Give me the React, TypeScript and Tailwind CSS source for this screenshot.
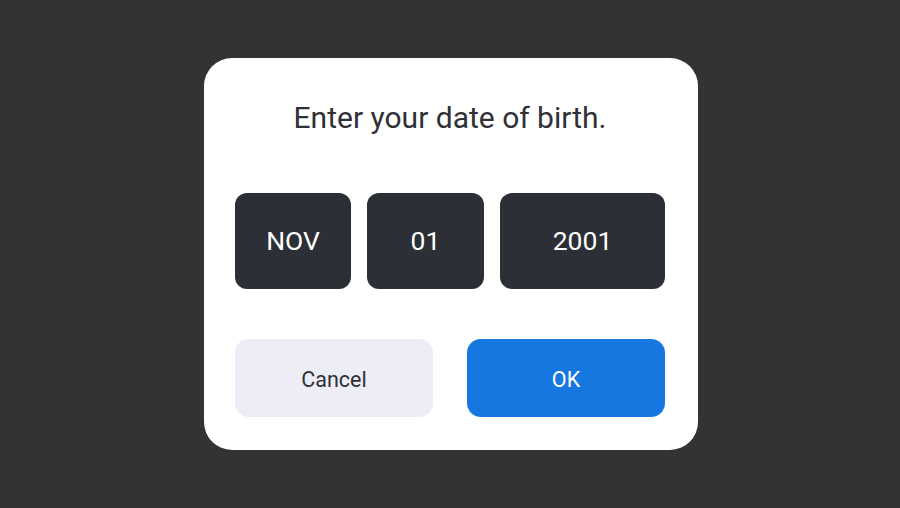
export default function App() {
  return (
    <div className="w-[900px] h-[508px] bg-[#333333] flex items-center justify-center font-['Roboto',sans-serif]">
      <div className="ml-[2px] w-[494px] h-[392px] bg-white rounded-[28px] pl-[31px] pr-[33px] pt-[40px] pb-[33px] flex flex-col">
        <h2 className="text-center text-[30px] leading-[40px] text-[#2f3137]">Enter your date of birth.</h2>
        <div className="flex gap-4 mt-[55px]">
          <div className="w-[116px] h-[96px] rounded-[12px] bg-[#2c2f36] flex items-center justify-center text-[26.5px] text-white">NOV</div>
          <div className="w-[117px] h-[96px] rounded-[12px] bg-[#2c2f36] flex items-center justify-center text-[26.5px] text-white">01</div>
          <div className="flex-1 h-[96px] rounded-[12px] bg-[#2c2f36] flex items-center justify-center text-[26.5px] text-white">2001</div>
        </div>
        <div className="flex justify-between mt-auto">
          <button className="w-[198px] h-[78px] pt-1 rounded-[14px] bg-[#ecedf5] text-[21.5px] text-[#2f3137]">Cancel</button>
          <button className="w-[198px] h-[78px] pt-1 rounded-[14px] bg-[#1677e0] text-[21.5px] text-white">OK</button>
        </div>
      </div>
    </div>
  );
}
